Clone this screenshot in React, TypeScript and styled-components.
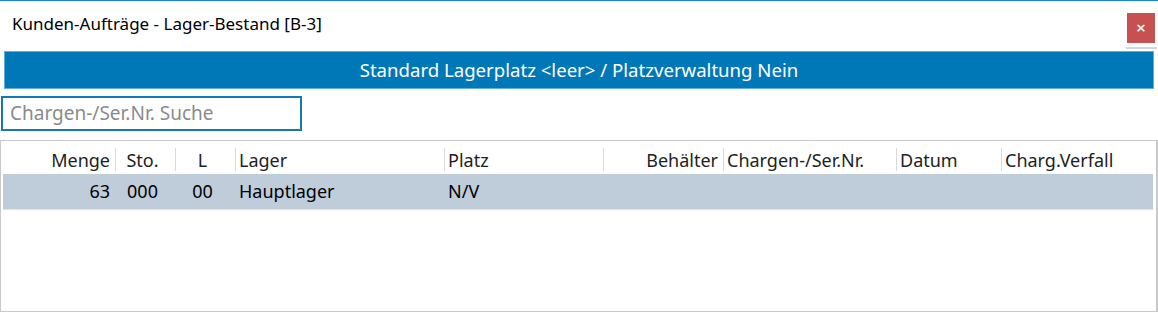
import styled, { createGlobalStyle } from "styled-components";

const GlobalStyle = createGlobalStyle`
  html, body {
    margin: 0;
    padding: 0;
    background: #ffffff;
    overflow: hidden;
  }
  body {
    font-family: "Noto Sans", "Open Sans", sans-serif;
    color: #000000;
  }
`;

const Window = styled.div`
  width: 1158px;
  height: 312px;
  box-sizing: border-box;
  border-top: 1px solid #1883d7;
  display: flex;
  flex-direction: column;
  background: #ffffff;
`;

const TitleBar = styled.div`
  height: 50px;
  display: flex;
  align-items: flex-start;
  justify-content: space-between;
  padding-left: 12px;
  padding-right: 1px;
`;

const Title = styled.div`
  font-size: 17px;
  line-height: 20px;
  margin-top: 13px;
  color: #000;
  white-space: nowrap;
`;

const CloseWrap = styled.div`
  margin-top: 12px;
  width: 31px;
  padding-bottom: 4px;
  border-bottom: 2px solid #d6d6d6;
  display: flex;
  justify-content: flex-start;
`;

const CloseButton = styled.button`
  width: 28px;
  height: 30px;
  margin-left: 1px;
  padding: 0;
  border: none;
  background: #c75050;
  color: #ffffff;
  font-family: "DejaVu Sans", sans-serif;
  font-weight: 700;
  font-size: 13px;
  line-height: 30px;
  display: flex;
  align-items: center;
  justify-content: center;
`;

const Banner = styled.div`
  margin: 0 4px;
  height: 38px;
  box-sizing: border-box;
  border: 1px solid #62ade0;
  background: #0078b7;
  color: #ffffff;
  font-size: 18.6px;
  display: flex;
  align-items: center;
  justify-content: center;
  padding-bottom: 1px;
`;

const Search = styled.input`
  margin: 7px 0 0 1px;
  width: 301px;
  height: 35px;
  box-sizing: border-box;
  border: 2px solid #1479b8;
  padding: 0 7px 2px;
  font-family: "Noto Sans", "Open Sans", sans-serif;
  font-size: 19px;
  color: #000;
  outline: none;
  &::placeholder {
    color: #8a8a8a;
  }
`;

const Table = styled.div`
  margin-top: 9px;
  flex: 1;
  width: 1158px;
  box-sizing: border-box;
  border: 1px solid #c9c9c9;
  border-right-width: 2px;
  padding: 0 3px 0 2px;
  font-size: 18px;
`;

const columns = "112px 60px 60px 209px 159px 120px 173px 105px 1fr";

const HeadRow = styled.div`
  display: grid;
  grid-template-columns: ${columns};
  height: 33px;
`;

const DataRow = styled.div`
  display: grid;
  grid-template-columns: ${columns};
  height: 35px;
  background: #bfccd9;
  border-bottom: 1px solid #e2e2e2;
`;

type Align = "left" | "center" | "right";

const HeadCell = styled.div<{ $align: Align; $sep?: boolean }>`
  position: relative;
  display: flex;
  align-items: center;
  padding: 4px 5px 0 ${(p) => (p.$align === "left" ? 4 : 0)}px;
  justify-content: ${(p) =>
    p.$align === "left" ? "flex-start" : p.$align === "right" ? "flex-end" : "center"};
  color: #1e1e1e;
  white-space: nowrap;
  &::before {
    content: "";
    display: ${(p) => (p.$sep ? "block" : "none")};
    position: absolute;
    left: 0;
    top: 7px;
    height: 23px;
    width: 1px;
    background: #d9d9d9;
  }
`;

const Cell = styled.div<{ $align: Align }>`
  display: flex;
  align-items: center;
  padding: 0 5px 1px ${(p) => (p.$align === "left" ? 4 : 0)}px;
  justify-content: ${(p) =>
    p.$align === "left" ? "flex-start" : p.$align === "right" ? "flex-end" : "center"};
  white-space: nowrap;
`;

const cols: { label: string; align: Align }[] = [
  { label: "Menge", align: "right" },
  { label: "Sto.", align: "center" },
  { label: "L", align: "center" },
  { label: "Lager", align: "left" },
  { label: "Platz", align: "left" },
  { label: "Behälter", align: "right" },
  { label: "Chargen-/Ser.Nr.", align: "left" },
  { label: "Datum", align: "left" },
  { label: "Charg.Verfall", align: "left" },
];

const rows = [["63", "000", "00", "Hauptlager", "N/V", "", "", "", ""]];

function App() {
  return (
    <>
      <GlobalStyle />
      <Window>
        <TitleBar>
          <Title>Kunden-Aufträge - Lager-Bestand [B-3]</Title>
          <CloseWrap>
            <CloseButton>×</CloseButton>
          </CloseWrap>
        </TitleBar>
        <Banner>Standard Lagerplatz &lt;leer&gt; / Platzverwaltung Nein</Banner>
        <Search placeholder="Chargen-/Ser.Nr. Suche" />
        <Table>
          <HeadRow>
            {cols.map((c, i) => (
              <HeadCell key={c.label} $align={c.align} $sep={i > 0}>
                {c.label}
              </HeadCell>
            ))}
          </HeadRow>
          {rows.map((r, ri) => (
            <DataRow key={ri}>
              {r.map((v, i) => (
                <Cell key={i} $align={cols[i].align}>
                  {v}
                </Cell>
              ))}
            </DataRow>
          ))}
        </Table>
      </Window>
    </>
  );
}

export default App;
